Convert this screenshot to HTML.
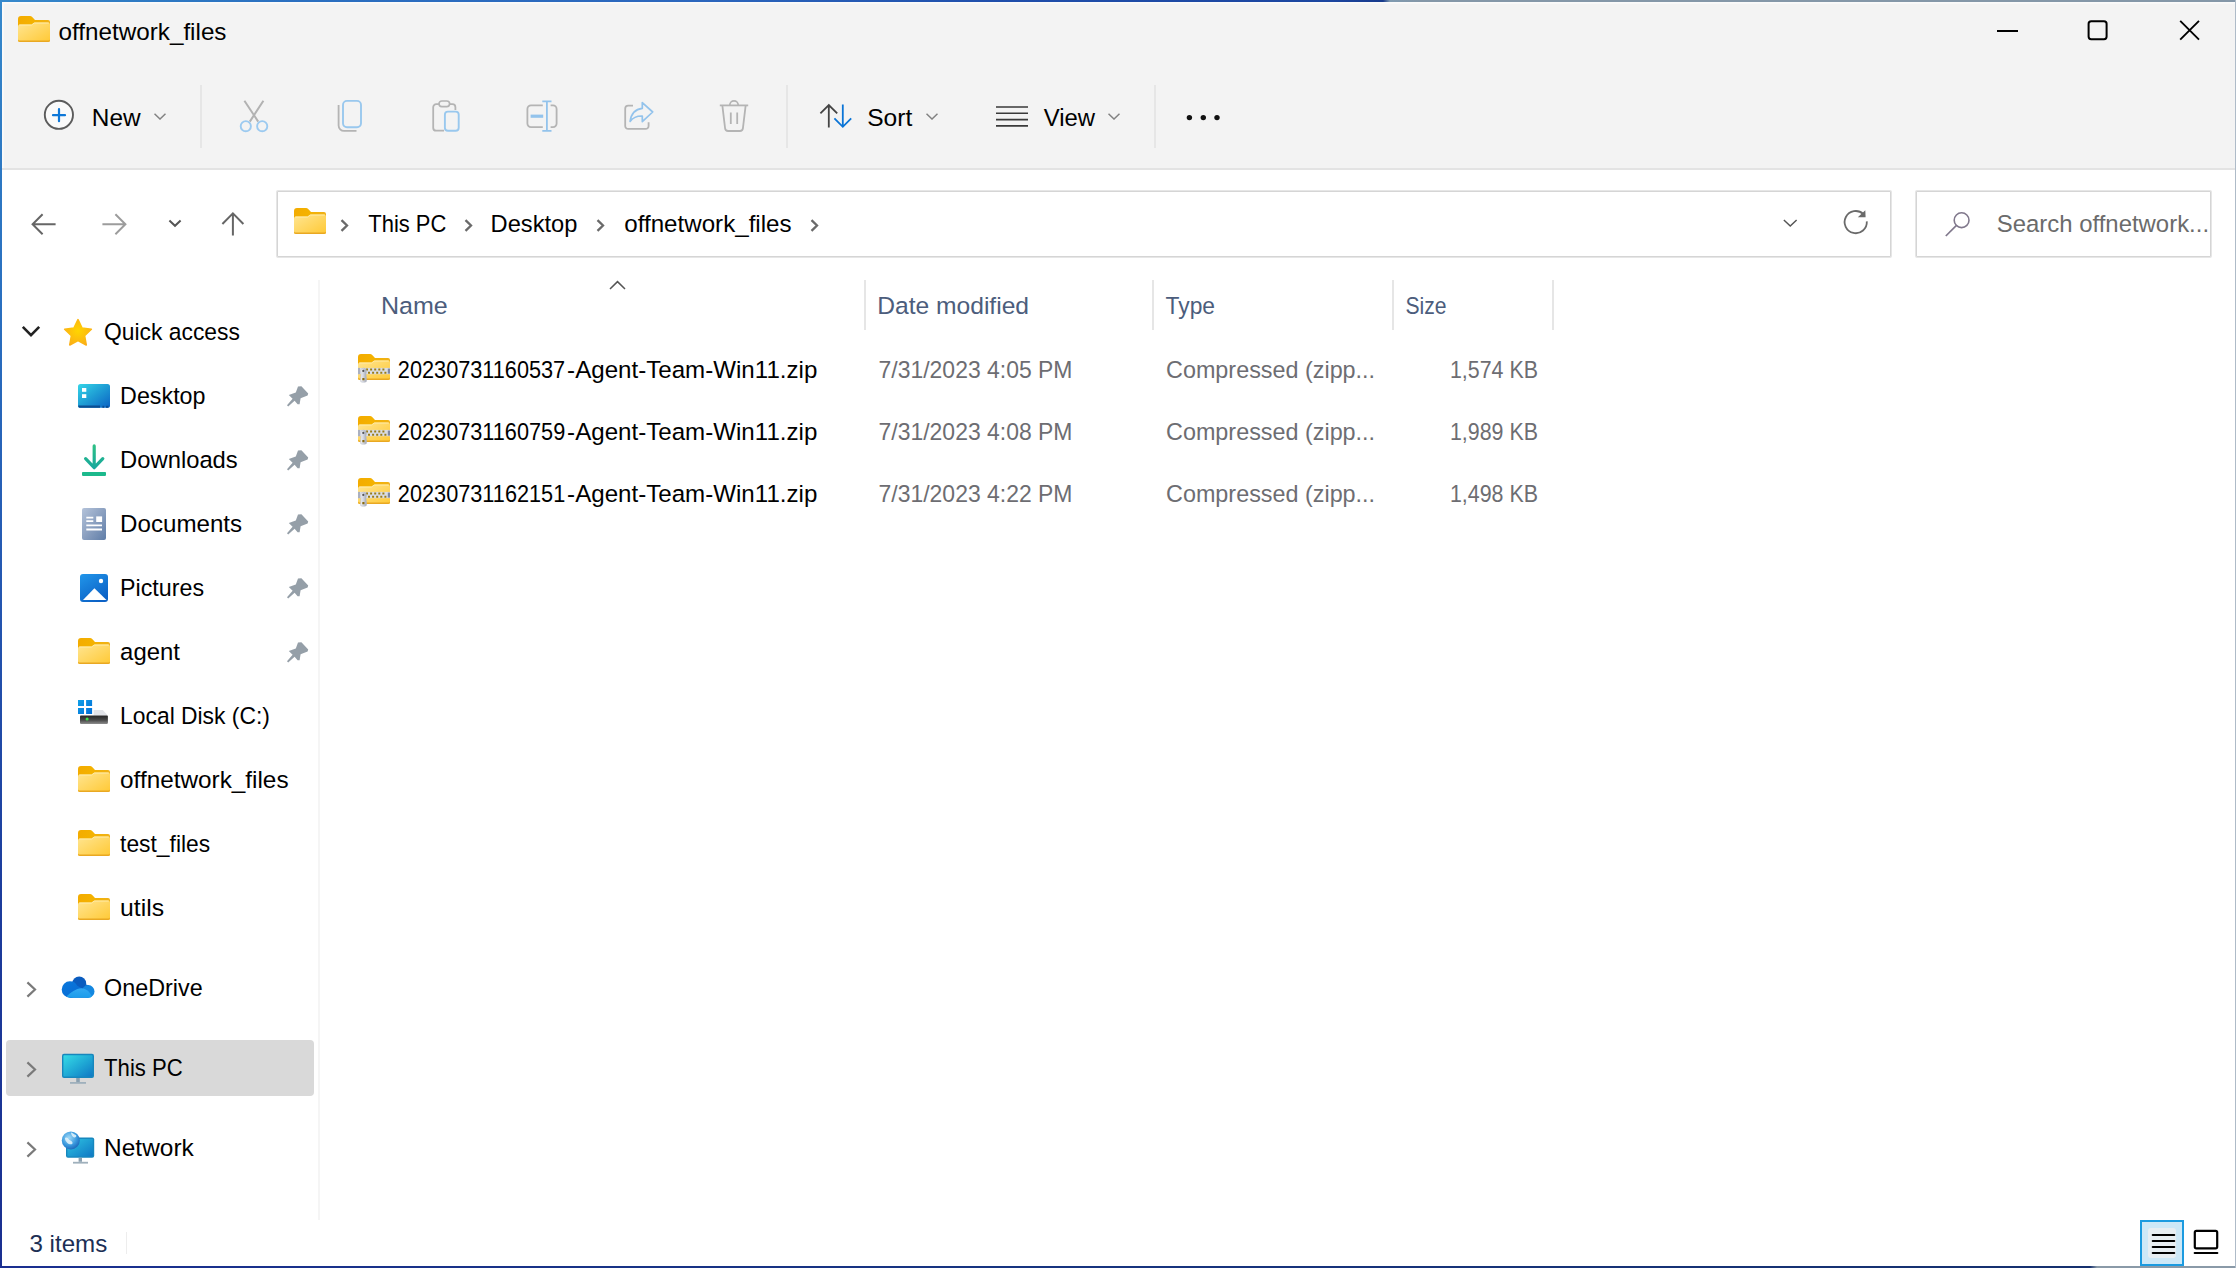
<!DOCTYPE html>
<html lang="en">
<head>
<meta charset="utf-8">
<title>offnetwork_files</title>
<style>
html,body{margin:0;padding:0;}
body{width:2236px;height:1268px;overflow:hidden;background:#fff;position:relative;
 font-family:"Liberation Sans",sans-serif;font-size:24.5px;line-height:30px;color:#111;}
.t,.s,.g{line-height:30px;}
.abs,.t,.g,.s,svg.i,div.b{position:absolute;}
.t,.s{white-space:pre;transform-origin:0 0;display:block;}
.s{top:0;}
.g{display:block;white-space:pre;}
svg.i{overflow:visible;}
#frame-top{left:0;top:0;width:2236px;height:2px;background:linear-gradient(90deg,#3689cc 0,#2f7cc4 120px,#2a6fc0 300px,#2b66bd 700px,#1f4eab 1000px,#1c46a0 1330px,#173a8c 1383px,#7f9ab0 1390px,#8497a8 1420px,#8497a8 2236px);}
#frame-left{left:0;top:0;width:2px;height:1268px;background:linear-gradient(180deg,#3689cc 0,#2f7cc4 120px,#2a70c0 300px,#2456b0 600px,#1c3c9c 900px,#1a2f90 1268px);}
#frame-bottom{left:0;top:1266px;width:2236px;height:2px;background:linear-gradient(90deg,#1a2f90 0,#173480 1000px,#15306e 2090px,#8a9aa8 2097px,#8a9aa8 2236px);}
#frame-right{left:2235px;top:0;width:1px;height:1268px;background:#aebbc8;}
#chrome{left:2px;top:2px;width:2233px;height:166px;background:#f3f3f3;}
#chrome-line{left:2px;top:168px;width:2233px;height:2px;background:#e3e3e3;}
#hl-top{left:2px;top:2px;width:2233px;height:2px;background:linear-gradient(180deg,#fbfbfb,#f7f7f7);}
#hl-left{left:2px;top:2px;width:2px;height:166px;background:linear-gradient(90deg,#fbfbfa,#f7f7f7);}
.vsep{width:2px;background:#e6e6e6;}
.box{box-sizing:border-box;border:1px solid #d5d5d5;background:#fff;box-shadow:0 0 0 1px #e6e6e6;border-radius:1px;}
#side-line{left:318px;top:280px;width:2px;height:940px;background:#f5f5f5;}
#sel{left:6px;top:1040px;width:308px;height:56px;background:#d9d9d9;border-radius:4px;}
.colsep{width:2px;top:280px;height:50px;background:#e6e6e6;}
</style>
</head>
<body>
<svg width="0" height="0" style="position:absolute">
<defs>
 <linearGradient id="fg" x1="0" y1="0" x2="1" y2="1"><stop offset="0" stop-color="#ffe591"/><stop offset="1" stop-color="#ffc935"/></linearGradient>
 <linearGradient id="tabg" x1="0" y1="0" x2="1" y2="0.300"><stop offset="0" stop-color="#f3ab00"/><stop offset="0.450" stop-color="#f4b200"/><stop offset="1" stop-color="#efb11a"/></linearGradient>
 <symbol id="folder" viewBox="0 0 32 26">
  <path d="M0 3a3 3 0 0 1 3-3h9a3 3 0 0 1 2.200 1L17 4h13a2 2 0 0 1 2 2v18a2 2 0 0 1-2 2H2a2 2 0 0 1-2-2z" fill="url(#tabg)"/>
  <path d="M0 10.500a2 2 0 0 1 2-2h11.200a3 3 0 0 0 1.900-.700l1.500-1.300H30a2 2 0 0 1 2 2V24a2 2 0 0 1-2 2H2a2 2 0 0 1-2-2z" fill="url(#fg)"/>
  <path d="M1.200 9h12.300l2.600-2h14.700" fill="none" stroke="#ffedb0" stroke-width="1" opacity="0.900"/>
  <path d="M0 23.400V24a2 2 0 0 0 2 2h28a2 2 0 0 0 2-2v-.600a2 2 0 0 1-2 1.100H2a2 2 0 0 1-2-1.100z" fill="#e9a822"/>
 </symbol>
 <symbol id="chev-r" viewBox="0 0 9 13"><path d="M1.5 1.2L7 6.5 1.5 11.8" fill="none" stroke="#6a6a6a" stroke-width="2.3"/></symbol>
 <symbol id="chev-d" viewBox="0 0 12 7"><path d="M0.500 0.700L6 6l5.500-5.300" fill="none" stroke="#828282" stroke-width="1.500"/></symbol>
 <symbol id="pin" viewBox="0 0 36 32"><path d="M8.8 14.9L15.8 12.4 18 6.6 21.4 6.2 28.2 13.6 27.6 15.6 20.6 18.2 19.6 24.2 17.6 24.2 14.6 20.8 8.2 26.4 7 25.2 12.6 18.8Z" fill="#959fa8"/></symbol>
</defs>
</svg>
<div class="abs" id="chrome"></div>
<div class="abs" id="chrome-line"></div><div class="abs" id="hl-top"></div><div class="abs" id="hl-left"></div>
<header id="titlebar"><svg class="i" style="left:18px;top:16px" width="32" height="26"><use href="#folder"/></svg><span class="t" style="left:58px;top:17px;color:#000;transform:translateX(0.54px) scaleX(0.9892);">offnetwork_files</span><svg class="i" style="left:1990px;top:10px" width="220" height="42" viewBox="0 0 220 42">
 <path d="M7 21h21" stroke="#000" stroke-width="2" fill="none"/>
 <rect x="98.600" y="11.200" width="18" height="18" rx="2.600" fill="none" stroke="#000" stroke-width="2"/>
 <path d="M190.200 10.900l18.800 18.800M209 10.900l-18.800 18.800" stroke="#000" stroke-width="1.900" fill="none"/>
</svg></header>
<div id="toolbar" role="toolbar"><svg class="i" style="left:42px;top:98px" width="34" height="34" viewBox="0 0 34 34">
 <circle cx="16.900" cy="16.800" r="14.100" fill="#fafafa" stroke="#5c5c5c" stroke-width="1.900"/>
 <path d="M17 11.200v12M11 17.200h12" stroke="#0f78d8" stroke-width="2.200" stroke-linecap="round" fill="none"/>
</svg><span class="t" style="left:91px;top:103px;color:#000;font-size:23px;transform:translateX(0.80px) scaleX(1.0604);">New</span><svg class="i" style="left:154px;top:113px" width="12" height="7"><use href="#chev-d"/></svg><div class="abs vsep" style="left:200px;top:85px;height:63px"></div><svg class="i" style="left:238px;top:98px" width="32" height="36" viewBox="0 0 32 36">
 <path d="M6.400 2.700L20.200 23.600M25.400 2.700L11.800 23.600" stroke="#b2b2b2" stroke-width="2" fill="none"/>
 <circle cx="7.800" cy="28.200" r="5.100" fill="#f3f3f3" stroke="#9ccaf0" stroke-width="1.900"/>
 <circle cx="24.200" cy="28.200" r="5.100" fill="#f3f3f3" stroke="#9ccaf0" stroke-width="1.900"/>
</svg><svg class="i" style="left:336px;top:98px" width="28" height="36" viewBox="0 0 28 36">
 <path d="M2.6 7v20.5a5.4 5.4 0 0 0 5.4 5.4h12.5" stroke="#b4b4b4" stroke-width="1.8" fill="none"/>
 <rect x="7" y="2.9" width="18" height="26.4" rx="4" fill="none" stroke="#99c8ee" stroke-width="1.9"/>
</svg><svg class="i" style="left:430px;top:98px" width="32" height="36" viewBox="0 0 32 36">
 <path d="M14 32.7H6.2a3 3 0 0 1-3-3V9.2a3 3 0 0 1 3-3h16.2a3 3 0 0 1 3 3V12" stroke="#b4b4b4" stroke-width="1.8" fill="none"/>
 <rect x="9" y="3" width="10.6" height="5.6" rx="2.8" fill="#f3f3f3" stroke="#b4b4b4" stroke-width="1.7"/>
 <rect x="14.9" y="13.6" width="13.8" height="19.2" rx="3" fill="#f3f3f3" stroke="#99c8ee" stroke-width="1.9"/>
</svg><svg class="i" style="left:524px;top:98px" width="36" height="36" viewBox="0 0 36 36">
 <path d="M18.8 7.3H7a3.6 3.6 0 0 0-3.6 3.6v14.6A3.6 3.6 0 0 0 7 29.1h11.8M26.6 7.3H29a3.6 3.6 0 0 1 3.6 3.6v14.6A3.6 3.6 0 0 1 29 29.1h-2.4" stroke="#b4b4b4" stroke-width="1.8" fill="none"/>
 <path d="M18.3 3.3h9.2M18.3 32.9h9.2M22.9 3.3v29.6" stroke="#93c3ec" stroke-width="1.8" fill="none"/>
 <path d="M6.6 18.2h12.6" stroke="#93c3ec" stroke-width="3.2" fill="none"/>
</svg><svg class="i" style="left:622px;top:98px" width="34" height="36" viewBox="0 0 34 36">
 <path d="M11 7.7H6.2a3 3 0 0 0-3 3v17.2a3 3 0 0 0 3 3h17.4a3 3 0 0 0 3-3v-3.6" stroke="#b4b4b4" stroke-width="1.8" fill="none"/>
 <path d="M20.3 4.6l10.4 9.4-10.4 9.6v-5.6c-5.2-.2-9 1.2-12.2 5.4 1-7.200 5-12.2 12.2-13z" stroke="#93c3ec" stroke-width="1.7" fill="none" stroke-linejoin="round"/>
</svg><svg class="i" style="left:718px;top:98px" width="32" height="36" viewBox="0 0 32 36">
 <path d="M1.800 7.400h28.400" stroke="#b4b4b4" stroke-width="1.8" fill="none"/>
 <path d="M11.800 7a4.200 4.200 0 0 1 8.400 0" stroke="#b4b4b4" stroke-width="1.7" fill="none"/>
 <path d="M4.400 7.800l2.700 22.600a3 3 0 0 0 3 2.600h11.800a3 3 0 0 0 3-2.600l2.700-22.600" stroke="#b4b4b4" stroke-width="1.8" fill="none"/>
 <path d="M12.800 14.400v11.600M19.200 14.400v11.600" stroke="#b4b4b4" stroke-width="1.8" fill="none"/>
</svg><div class="abs vsep" style="left:786px;top:85px;height:63px"></div><svg class="i" style="left:818px;top:102px" width="36" height="28" viewBox="0 0 36 28">
 <path d="M10.800 25.400V3.200M2.400 11.400l8.400-8.400 8.400 8.400" stroke="#444" stroke-width="1.8" fill="none"/>
 <path d="M24.800 2.600v22.200M16.400 16.400l8.400 8.400 8.400-8.400" stroke="#0a74d6" stroke-width="1.8" fill="none"/>
</svg><span class="t" style="left:867px;top:103px;color:#000;font-size:23px;transform:translateX(0.20px) scaleX(1.0683);">Sort</span><svg class="i" style="left:926px;top:113px" width="12" height="7"><use href="#chev-d"/></svg><svg class="i" style="left:996px;top:104px" width="32" height="24" viewBox="0 0 32 24">
 <path d="M0 3h32M0 9.300h32M0 15.600h32M0 21.900h32" stroke="#3a3a3a" stroke-width="1.600" fill="none"/>
</svg><span class="t" style="left:1043px;top:103px;color:#000;font-size:23px;transform:translateX(0.76px) scaleX(1.0376);">View</span><svg class="i" style="left:1107.500px;top:113px" width="12" height="7"><use href="#chev-d"/></svg><div class="abs vsep" style="left:1154px;top:85px;height:63px"></div><svg class="i" style="left:1184px;top:112px" width="40" height="12" viewBox="0 0 40 12">
 <circle cx="5.400" cy="5.600" r="2.700" fill="#111"/><circle cx="19.300" cy="5.600" r="2.700" fill="#111"/><circle cx="33" cy="5.600" r="2.700" fill="#111"/>
</svg></div>
<nav id="nav"><svg class="i" style="left:28px;top:208px" width="224" height="32" viewBox="0 0 224 32">
 <path d="M27.600 16.200H5M14.600 6.200L4.600 16.200l10 10" stroke="#666" stroke-width="2" fill="none"/>
 <path d="M74.400 16.200H97M87.400 6.200l10 10-10 10" stroke="#9c9c9c" stroke-width="2" fill="none"/>
 <path d="M141.400 12.600l5.600 5.200 5.600-5.200" stroke="#555" stroke-width="2" fill="none"/>
 <path d="M204.900 27.600V5.400M194.400 16l10.500-10.600L215.400 16" stroke="#666" stroke-width="2" fill="none"/>
</svg><div class="abs box" style="left:277px;top:191px;width:1614px;height:66px"></div><svg class="i" style="left:294px;top:208px" width="32" height="26"><use href="#folder"/></svg><svg class="i" style="left:339.5px;top:218.500px" width="9" height="13"><use href="#chev-r"/></svg><svg class="i" style="left:463.5px;top:218.500px" width="9" height="13"><use href="#chev-r"/></svg><svg class="i" style="left:595.5px;top:218.500px" width="9" height="13"><use href="#chev-r"/></svg><svg class="i" style="left:809.5px;top:218.500px" width="9" height="13"><use href="#chev-r"/></svg><span class="t" style="left:368px;top:209px;color:#000;transform:translateX(0.28px) scaleX(0.8953);">This PC</span><span class="t" style="left:490px;top:209px;color:#000;transform:translateX(0.55px) scaleX(0.9659);">Desktop</span><span class="t" style="left:624px;top:209px;color:#000;transform:translateX(0.25px) scaleX(0.9855);">offnetwork_files</span><svg class="i" style="left:1781.500px;top:218.500px" width="16.500" height="8.500" viewBox="0 0 14 8"><path d="M1 1l6 5.600L13 1" fill="none" stroke="#555" stroke-width="1.400"/></svg><svg class="i" style="left:1842px;top:208px" width="28" height="28" viewBox="0 0 28 28">
 <path d="M24.800 13.400A11.100 11.100 0 1 1 21.300 6" stroke="#6a6a6a" stroke-width="1.800" fill="none"/>
 <path d="M23.300 2.200l.300 7H15.800z" fill="#6a6a6a"/>
</svg><div class="abs box" style="left:1916px;top:191px;width:295px;height:66px"></div><svg class="i" style="left:1944px;top:210px" width="28" height="28" viewBox="0 0 28 28">
 <circle cx="17.600" cy="10.200" r="7.400" fill="none" stroke="#80788c" stroke-width="1.600"/>
 <path d="M12.200 15.600L1.800 26" stroke="#80788c" stroke-width="1.700" fill="none"/>
</svg><span class="t" style="left:1996px;top:209px;color:#6b6b6b;transform:translateX(0.80px) scaleX(0.9760);">Search offnetwork...</span></nav>
<aside id="sidebar"><div class="abs" id="side-line"></div><div class="abs" id="sel"></div><svg class="i" style="left:21px;top:325px" width="20" height="13" viewBox="0 0 20 13"><path d="M1.800 1.800l8.200 8.400 8.200-8.400" fill="none" stroke="#222" stroke-width="2.600"/></svg><svg class="i" style="left:63px;top:318px" width="30" height="29" viewBox="0 0 30 29">
 <defs><radialGradient id="sg" cx="0.5" cy="0.45" r="0.6"><stop offset="0" stop-color="#ffd500"/><stop offset="1" stop-color="#fbae17"/></radialGradient></defs>
 <path d="M15.00 1.60L19.06 10.02L28.31 11.27L21.56 17.73L23.23 26.93L15.00 22.50L6.77 26.93L8.44 17.73L1.69 11.27L10.94 10.02z" fill="url(#sg)" stroke="url(#sg)" stroke-width="1.600" stroke-linejoin="round"/>
</svg><span class="t" style="left:104px;top:317px;color:#000;transform:translateX(0.10px) scaleX(0.9315);">Quick access</span><svg class="i" style="left:78px;top:384px" width="32" height="24" viewBox="0 0 32 24">
 <defs><linearGradient id="dg" x1="0" y1="0" x2="1" y2="1"><stop offset="0" stop-color="#35d6e8"/><stop offset="0.500" stop-color="#1e9cd4"/><stop offset="1" stop-color="#0b62c4"/></linearGradient></defs>
 <path d="M0 2.500A2.500 2.500 0 0 1 2.500 0h27A2.500 2.500 0 0 1 32 2.500V22a1.800 1.800 0 0 1-1.800 1.800H1.800A1.800 1.800 0 0 1 0 22z" fill="url(#dg)"/>
 <path d="M0.300 21.500H22v2.300H1.800a1.800 1.800 0 0 1-1.500-1z" fill="#0b4d92"/>
 <rect x="24.400" y="21.800" width="1.800" height="2" fill="#0b4d92"/><rect x="28" y="21.800" width="2.400" height="2" fill="#0b4d92"/>
 <rect x="4" y="4" width="4.300" height="3.800" fill="#fff"/><rect x="4" y="10.200" width="4.300" height="3.800" fill="#fff"/>
</svg><span class="t" style="left:120px;top:381px;color:#000;transform:translateX(0.10px) scaleX(0.9504);">Desktop</span><svg class="i" style="left:280px;top:380px" width="36" height="32"><use href="#pin"/></svg><svg class="i" style="left:81px;top:443px" width="26" height="34" viewBox="0 0 26 34">
 <defs><linearGradient id="dl" x1="0" y1="0" x2="0" y2="1"><stop offset="0" stop-color="#2dbf86"/><stop offset="1" stop-color="#17a89c"/></linearGradient></defs>
 <path d="M13.200 2.900v21M4.600 15.600l8.600 9.100 8.600-9.100" stroke="url(#dl)" stroke-width="3.200" fill="none" stroke-linecap="round" stroke-linejoin="round"/>
 <rect x="1" y="29" width="24" height="3.900" rx="0.800" fill="#1cb98c"/>
</svg><span class="t" style="left:120px;top:445px;color:#000;transform:translateX(0.10px) scaleX(0.9703);">Downloads</span><svg class="i" style="left:280px;top:444px" width="36" height="32"><use href="#pin"/></svg><svg class="i" style="left:82px;top:508px" width="24" height="32" viewBox="0 0 24 32">
 <defs><linearGradient id="dc" x1="0" y1="0" x2="1" y2="1"><stop offset="0" stop-color="#b4c3da"/><stop offset="0.500" stop-color="#8ba0c0"/><stop offset="1" stop-color="#5f7da8"/></linearGradient></defs>
 <rect x="0" y="0" width="24" height="32" rx="2" fill="url(#dc)"/>
 <path d="M4.300 9.700h7M4.300 13.200h7M4.300 17.400h15.700M4.300 21.500h15.700" stroke="#fff" stroke-width="1.800" fill="none"/>
 <rect x="14.200" y="8.400" width="5.900" height="5.600" fill="#fff"/>
</svg><span class="t" style="left:120px;top:509px;color:#000;transform:translateX(0.10px) scaleX(0.9844);">Documents</span><svg class="i" style="left:280px;top:508px" width="36" height="32"><use href="#pin"/></svg><svg class="i" style="left:80px;top:574px" width="28" height="28" viewBox="0 0 28 28">
 <defs><linearGradient id="pc" x1="0" y1="0" x2="0.600" y2="1"><stop offset="0" stop-color="#2196ea"/><stop offset="1" stop-color="#0c62c6"/></linearGradient></defs>
 <rect x="0" y="0" width="28" height="28" rx="3" fill="url(#pc)"/>
 <path d="M3 26l11.400-11.800L26.500 26z" fill="#fff"/>
 <circle cx="21" cy="7" r="2.200" fill="#fff"/>
</svg><span class="t" style="left:120px;top:573px;color:#000;transform:translateX(0.10px) scaleX(0.9482);">Pictures</span><svg class="i" style="left:280px;top:572px" width="36" height="32"><use href="#pin"/></svg><svg class="i" style="left:78px;top:638px" width="32" height="26"><use href="#folder"/></svg><span class="t" style="left:120px;top:637px;color:#000;transform:translateX(0.10px) scaleX(0.9746);">agent</span><svg class="i" style="left:280px;top:636px" width="36" height="32"><use href="#pin"/></svg><svg class="i" style="left:78px;top:700px" width="30" height="24" viewBox="0 0 30 24">
 <defs><linearGradient id="hd" x1="0" y1="0" x2="0" y2="1"><stop offset="0" stop-color="#262626"/><stop offset="0.550" stop-color="#4a4a4a"/><stop offset="1" stop-color="#8c8c8c"/></linearGradient>
 <linearGradient id="wl" x1="0" y1="0" x2="1" y2="1"><stop offset="0" stop-color="#10a0e8"/><stop offset="1" stop-color="#006cd6"/></linearGradient></defs>
 <path d="M0 0h6v6H0zM8.100 0h6v6h-6zM0 8.100h6v6H0zM8.100 8.100h6v6h-6z" fill="url(#wl)"/>
 <path d="M15.600 9.900h9.200l5 5.700H15.600z" fill="#e2e4e9"/>
 <rect x="2" y="15.600" width="27.900" height="8.300" rx="0.800" fill="url(#hd)"/>
 <circle cx="9.100" cy="19" r="1.500" fill="#3ee04a"/>
</svg><span class="t" style="left:120px;top:701px;color:#000;transform:translateX(0.10px) scaleX(0.9322);">Local Disk (C:)</span><svg class="i" style="left:78px;top:766px" width="32" height="26"><use href="#folder"/></svg><span class="t" style="left:120px;top:765px;color:#000;transform:translateX(0.10px) scaleX(0.9921);">offnetwork_files</span><svg class="i" style="left:78px;top:830px" width="32" height="26"><use href="#folder"/></svg><span class="t" style="left:120px;top:829px;color:#000;transform:translateX(0.10px) scaleX(0.9310);">test_files</span><svg class="i" style="left:78px;top:894px" width="32" height="26"><use href="#folder"/></svg><span class="t" style="left:120px;top:893px;color:#000;transform:translateX(0.10px) scaleX(1.0096);">utils</span><svg class="i" style="left:25.500px;top:980.5px" width="11" height="17" viewBox="0 0 11 17"><path d="M1.400 1.400l7.600 7.100-7.600 7.100" fill="none" stroke="#7a7a7a" stroke-width="2.200"/></svg><svg class="i" style="left:61px;top:976px" width="34" height="23" viewBox="0 0 34 23">
 <defs><linearGradient id="od1" x1="0" y1="0" x2="1" y2="1"><stop offset="0" stop-color="#0a78dc"/><stop offset="1" stop-color="#0668d2"/></linearGradient>
 <linearGradient id="od2" x1="0" y1="0" x2="0" y2="1"><stop offset="0" stop-color="#32a8f2"/><stop offset="1" stop-color="#1b9ceb"/></linearGradient></defs>
 <path d="M9 13l9-6 9.500 8.500V21.700H9z" fill="#0a62c6"/>
 <circle cx="18.200" cy="7.400" r="7" fill="#0a5cbf"/>
 <path d="M22 12l3.200-3.600 3 1.200v6z" fill="#0a5cbf"/>
 <circle cx="27.200" cy="15.400" r="6.300" fill="#1487e0"/>
 <path d="M8.900 5.300a8.200 8.200 0 0 1 7.300 4.400l7.800 4.200-13 7.800H8.900a8.200 8.200 0 0 1 0-16.400z" fill="url(#od1)"/>
 <path d="M5.600 20.300C9.500 16.500 15 12.400 20.400 12.200c4.600 0 8.400 3.600 10.600 8.200a6 6 0 0 1-3.500 1.300H8.900a8.200 8.200 0 0 1-3.300-1.400z" fill="url(#od2)"/>
</svg><span class="t" style="left:104px;top:973px;color:#000;transform:translateX(0.10px) scaleX(0.9522);">OneDrive</span><svg class="i" style="left:25.500px;top:1060.5px" width="11" height="17" viewBox="0 0 11 17"><path d="M1.400 1.400l7.600 7.100-7.600 7.100" fill="none" stroke="#7a7a7a" stroke-width="2.200"/></svg><svg class="i" style="left:62px;top:1053px" width="32" height="32" viewBox="0 0 32 32">
 <defs><linearGradient id="tp" x1="0" y1="0" x2="1" y2="1"><stop offset="0" stop-color="#36dbe6"/><stop offset="0.550" stop-color="#1ea6d4"/><stop offset="1" stop-color="#0f78c4"/></linearGradient></defs>
 <rect x="0" y="0.800" width="32" height="24.200" rx="2" fill="#1787bd"/>
 <rect x="1.400" y="2.200" width="29.200" height="21.400" rx="0.800" fill="url(#tp)"/>
 <path d="M14.200 25h3.600v4h-3.600z" fill="#8aa0b0"/>
 <rect x="8" y="29" width="16" height="1.800" fill="#9fb0bc"/>
</svg><span class="t" style="left:104px;top:1053px;color:#000;transform:translateX(0.10px) scaleX(0.9030);">This PC</span><svg class="i" style="left:25.500px;top:1140.5px" width="11" height="17" viewBox="0 0 11 17"><path d="M1.400 1.400l7.600 7.100-7.600 7.100" fill="none" stroke="#7a7a7a" stroke-width="2.200"/></svg><svg class="i" style="left:61px;top:1130px" width="34" height="35" viewBox="0 0 34 35">
 <defs><linearGradient id="nw" x1="0" y1="0" x2="1" y2="1"><stop offset="0" stop-color="#2fc4e2"/><stop offset="1" stop-color="#0f78c4"/></linearGradient>
 <radialGradient id="gl" cx="0.400" cy="0.350" r="0.700"><stop offset="0" stop-color="#9fd8f6"/><stop offset="0.600" stop-color="#3a9ade"/><stop offset="1" stop-color="#1a64b8"/></radialGradient></defs>
 <rect x="5" y="7.600" width="28.200" height="20.200" rx="2" fill="#1787bd"/>
 <rect x="6.400" y="9" width="25.400" height="17.400" fill="url(#nw)"/>
 <path d="M17.600 27.800h3.400v4h-3.400z" fill="#8aa0b0"/>
 <rect x="12" y="31.800" width="15" height="1.800" fill="#9fb0bc"/>
 <circle cx="9.800" cy="10.400" r="9" fill="url(#gl)"/>
 <path d="M4 8c2-1 3 0 4 1.500s3 1 3.500 3-2 2-3.500 1.500S3.500 10 4 8zM10 2.500c2 .5 3 2 5 2.500 1 1.500-.5 3-2 2.500s-3-3-3-5z" fill="#e6f4fc" opacity="0.850"/>
</svg><span class="t" style="left:104px;top:1133px;color:#000;transform:translateX(0.10px) scaleX(0.9976);">Network</span></aside>
<main id="list"><span class="t" style="left:380px;top:291px;color:#4c5d7c;transform:translateX(0.90px) scaleX(1.0222);">Name</span><svg class="i" style="left:609px;top:280px" width="17" height="10" viewBox="0 0 17 10"><path d="M1 9L8.500 1.600 16 9" fill="none" stroke="#555" stroke-width="1.500"/></svg><div class="abs colsep" style="left:864px"></div><div class="abs colsep" style="left:1152px"></div><div class="abs colsep" style="left:1392px"></div><div class="abs colsep" style="left:1552px"></div><span class="t" style="left:877px;top:291px;color:#4c5d7c;transform:translateX(0.19px) scaleX(1.0045);">Date modified</span><span class="t" style="left:1165px;top:291px;color:#4c5d7c;transform:translateX(0.61px) scaleX(0.9308);">Type</span><span class="t" style="left:1405px;top:291px;color:#4c5d7c;transform:translateX(0.41px) scaleX(0.8626);">Size</span><svg width="0" height="0" style="position:absolute"><defs>
 <linearGradient id="zp" x1="0" y1="0" x2="1" y2="0"><stop offset="0" stop-color="#f4f4f8"/><stop offset="0.500" stop-color="#d0d3dc"/><stop offset="1" stop-color="#9fa4b2"/></linearGradient>
 <symbol id="zip" viewBox="0 0 32 30">
  <use href="#folder" x="0" y="0" width="32" height="26"/>
  <rect x="0" y="13.900" width="32" height="6.300" fill="#d9dce4"/>
  <rect x="0" y="13.900" width="2" height="6.300" fill="#aab0c0"/>
  <rect x="29.800" y="14.600" width="2.200" height="5" fill="#7f88a2"/>
  <path d="M8 14.400h2v2h-2zM12.100 14.400h2v2h-2zM16.200 14.400h2v2h-2zM20.300 14.400h2v2h-2zM24.400 14.400h2v2h-2zM10 17.800h2v2h-2zM14.100 17.800h2v2h-2zM18.200 17.800h2v2h-2zM22.300 17.800h2v2h-2zM26.400 17.800h2v2h-2z" fill="#9a7c14"/>
  <path d="M2.600 17a2.900 2.900 0 0 1 5.800 0l-.4 3 .6 6.200a1.800 1.800 0 0 1-1.800 2H4.200a1.800 1.800 0 0 1-1.800-2L3 20z" fill="url(#zp)" stroke="#b4b8c4" stroke-width="0.500"/>
  <circle cx="5.300" cy="16.900" r="1.100" fill="#555"/>
  <rect x="4.300" y="24" width="2.200" height="2.200" rx="0.500" fill="#8a6c10"/>
 </symbol></defs></svg><div class="row"><svg class="i" style="left:358px;top:354px" width="32" height="30"><use href="#zip"/></svg><span class="g" style="left:397px;top:355px;color:#000"><span class="s" style="left:0px;transform:translateX(0.87px) scaleX(0.8854);">20230731160537</span><span class="s" style="left:170px;transform:translateX(0.11px) scaleX(0.9846);">-Agent-Team-Win11.zip</span></span><span class="t" style="left:878px;top:355px;color:#6d6d72;transform:translateX(0.58px) scaleX(0.9365);">7/31/2023 4:05 PM</span><span class="t" style="left:1166px;top:355px;color:#6d6d72;transform:translateX(0.04px) scaleX(0.9536);">Compressed (zipp...</span><span class="t" style="left:1449px;top:355px;color:#6d6d72;transform:translateX(0.96px) scaleX(0.8727);">1,574 KB</span></div><div class="row"><svg class="i" style="left:358px;top:416px" width="32" height="30"><use href="#zip"/></svg><span class="g" style="left:397px;top:417px;color:#000"><span class="s" style="left:0px;transform:translateX(0.87px) scaleX(0.8857);">20230731160759</span><span class="s" style="left:170px;transform:translateX(0.11px) scaleX(0.9846);">-Agent-Team-Win11.zip</span></span><span class="t" style="left:878px;top:417px;color:#6d6d72;transform:translateX(0.58px) scaleX(0.9365);">7/31/2023 4:08 PM</span><span class="t" style="left:1166px;top:417px;color:#6d6d72;transform:translateX(0.04px) scaleX(0.9536);">Compressed (zipp...</span><span class="t" style="left:1449px;top:417px;color:#6d6d72;transform:translateX(0.96px) scaleX(0.8727);">1,989 KB</span></div><div class="row"><svg class="i" style="left:358px;top:478px" width="32" height="30"><use href="#zip"/></svg><span class="g" style="left:397px;top:479px;color:#000"><span class="s" style="left:0px;transform:translateX(0.87px) scaleX(0.8859);">20230731162151</span><span class="s" style="left:170px;transform:translateX(0.11px) scaleX(0.9846);">-Agent-Team-Win11.zip</span></span><span class="t" style="left:878px;top:479px;color:#6d6d72;transform:translateX(0.58px) scaleX(0.9365);">7/31/2023 4:22 PM</span><span class="t" style="left:1166px;top:479px;color:#6d6d72;transform:translateX(0.04px) scaleX(0.9536);">Compressed (zipp...</span><span class="t" style="left:1449px;top:479px;color:#6d6d72;transform:translateX(0.96px) scaleX(0.8727);">1,498 KB</span></div></main>
<footer id="status"><span class="t" style="left:29px;top:1229px;color:#1c2f55;transform:translateX(0.45px) scaleX(0.9852);">3 items</span><div class="abs" style="left:126px;top:1232px;width:1px;height:22px;background:#ededed"></div><div class="abs" style="left:2140px;top:1220px;width:44px;height:46px;box-sizing:border-box;border:2px solid #1c9be0;background:#cde8f7"></div><div class="abs" style="left:2148px;top:1228px;width:28px;height:30px;background:#e8eef2;border-radius:3px"></div><svg class="i" style="left:2150px;top:1230px" width="26" height="28" viewBox="0 0 26 28">
 <path d="M2.800 5h21.400M2.800 11h21.400M2.800 17h21.400M2.800 23h21.400" stroke="#000" stroke-width="2.200" stroke-linecap="round" fill="none"/>
</svg><svg class="i" style="left:2191.600px;top:1227.300px" width="28" height="28" viewBox="0 0 28 28">
 <rect x="2.800" y="3.800" width="22.400" height="17.600" rx="1.600" fill="#fff" stroke="#000" stroke-width="2.200"/>
 <path d="M2.600 25.900h22.800" stroke="#000" stroke-width="2" stroke-linecap="round" fill="none"/>
</svg></footer>
<div class="abs" id="frame-top"></div><div class="abs" id="frame-left"></div><div class="abs" id="frame-bottom"></div><div class="abs" id="frame-right"></div>
</body>
</html>
